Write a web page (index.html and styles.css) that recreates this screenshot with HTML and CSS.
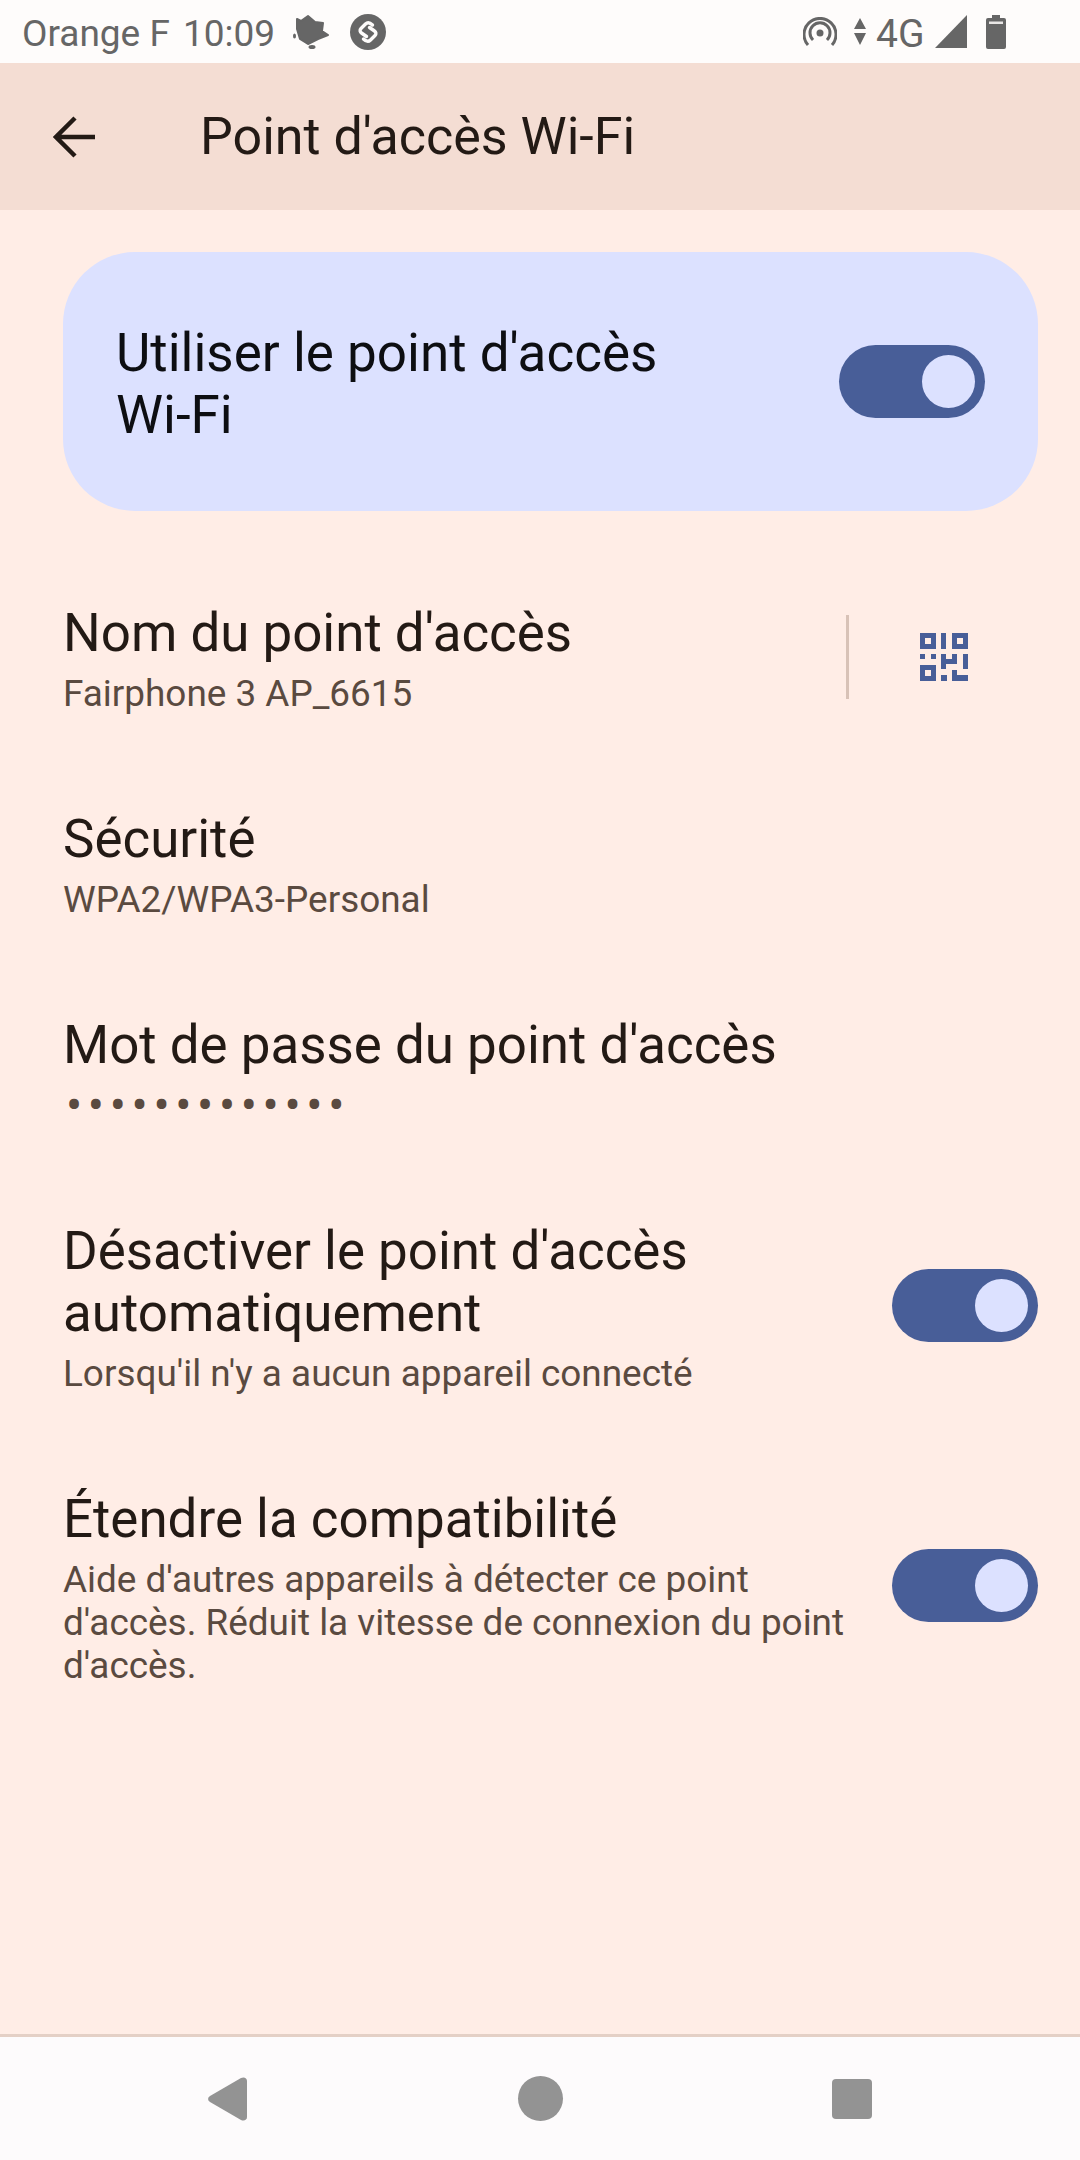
FILE: index.html
```html
<!DOCTYPE html>
<html lang="fr">
<head>
	<meta charset="utf-8">
	<title>Point d'accès Wi-Fi</title>
	<link rel="stylesheet" href="styles.css">
</head>
<body>
	<div class="status">
		<span class="carrier">Orange F</span>
		<span class="time">10:09</span>
		<svg class="leaf" viewBox="0 0 36 36"><path d="M4 5l4 2 7-5 7 6 8 1-1 8 6 4-10 4-10 5-8-5-3-10z" fill="#666" stroke="#666" stroke-width="2" stroke-linejoin="round"/><ellipse cx="1.500" cy="22" rx="1.500" ry="2.500" fill="#666"/><ellipse cx="19" cy="33" rx="3.500" ry="2" fill="#666"/></svg>
		<svg class="shazam" viewBox="0 0 36 36"><circle cx="18" cy="18" r="18" fill="#666"/><path d="M22.500 11C20 8.500 17.500 8 15.500 10L11 14.500C9.500 16 10 18 11.500 19L16.500 22.500M13.500 25C16 27.500 18.500 28 20.500 26L25 21.500C26.500 20 26 18 24.500 17L19.500 13.500" fill="none" stroke="#fefcfb" stroke-width="3.400" stroke-linecap="round"/></svg>
		<span class="status-right">
			<svg class="hotspot" viewBox="0 0 34 30"><circle cx="17" cy="16" r="3.500" fill="#666"/><path d="M10 23a10 10 0 1 1 14 0" fill="none" stroke="#666" stroke-width="3"/><path d="M5 28a16 16 0 1 1 24 0" fill="none" stroke="#666" stroke-width="3"/></svg>
			<svg class="updown" viewBox="0 0 12 27"><path d="M6 0l6 11H0zM0 15h12L6 27z" fill="#666"/></svg>
			<span class="net">4G</span>
			<svg class="signal" viewBox="0 0 32 33"><path d="M32 0v33H0z" fill="#666"/></svg>
			<svg class="battery" viewBox="0 0 20 34"><path d="M6 0h8v3h4a2 2 0 0 1 2 2v27a2 2 0 0 1-2 2H2a2 2 0 0 1-2-2V5a2 2 0 0 1 2-2h4z" fill="#666"/><rect x="3" y="6.500" width="14" height="2.500" fill="#e8e6e5"/></svg>
		</span>
	</div>

	<div class="appbar">
		<svg class="back" viewBox="0 0 42 42"><path d="M42 21H3M22 2L3 21l19 19" fill="none" stroke="#231a15" stroke-width="4.500"/></svg>
		<span class="appbar-title">Point d'accès Wi-Fi</span>
	</div>

	<div class="card">
		<div class="card-label">Utiliser le point d'accès Wi-Fi</div>
		<div class="toggle toggle-card"><i></i></div>
	</div>

	<div class="row">
		<div class="row-text">
			<div class="title">Nom du point d'accès</div>
			<div class="sub">Fairphone 3 AP_6615</div>
		</div>
		<div class="divider"></div>
		<svg class="qr" viewBox="0 0 48 48"><path fill="#485e98" fill-rule="evenodd" d="M0 0h16v16H0zM5 5v6h6V5zM21 0h5v16h-5zM32 0h16v16H32zM37 5v6h6V5zM0 21h5v5H0zM11 21h5v5h-5zM0 32h16v16H0zM5 37v6h6v-6zM21 21h5v5h6v-5h5v10H26v5h-5zM43 21h5v15h-5zM32 37h5v5h11v6H32zM21 42h6v6h-6z"/></svg>
	</div>

	<div class="row">
		<div class="row-text">
			<div class="title">Sécurité</div>
			<div class="sub">WPA2/WPA3-Personal</div>
		</div>
	</div>

	<div class="row">
		<div class="row-text">
			<div class="title">Mot de passe du point d'accès</div>
			<div class="sub dots">•••••••••••••</div>
		</div>
	</div>

	<div class="row">
		<div class="row-text">
			<div class="title">Désactiver le point d'accès automatiquement</div>
			<div class="sub">Lorsqu'il n'y a aucun appareil connecté</div>
		</div>
		<div class="toggle"><i></i></div>
	</div>

	<div class="row">
		<div class="row-text">
			<div class="title">Étendre la compatibilité</div>
			<div class="sub">Aide d'autres appareils à détecter ce point d'accès. Réduit la vitesse de connexion du point d'accès.</div>
		</div>
		<div class="toggle"><i></i></div>
	</div>

	<div class="nav">
		<svg class="nav-back" viewBox="0 0 39 44"><path d="M2 19L33 1c3-1.500 6 0 6 3v36c0 3-3 4.500-6 3L2 25c-2.500-1.500-2.500-4.500 0-6z" fill="#939393"/></svg>
		<div class="nav-home"></div>
		<div class="nav-recent"></div>
	</div>
</body>
</html>
```

FILE: styles.css
```css
* {
	margin: 0;
	padding: 0;
	box-sizing: border-box;
}

body {
	width: 1080px;
	height: 2160px;
	background: #ffede6;
	font-family: Roboto, sans-serif;
	color: #231a15;
	display: flex;
	flex-direction: column;
}

.status {
	height: 63px;
	background: #fefcfb;
	color: #666;
	display: flex;
	align-items: center;
	padding: 0 0 0 22px;
	font-size: 37px;
}

.carrier {
	width: 161px;
	padding-top: 4px;
}

.time {
	width: 110px;
	padding-top: 4px;
}

.leaf {
	width: 36px;
	height: 36px;
	margin-right: 21px;
}

.shazam {
	width: 36px;
	height: 36px;
}

.status-right {
	margin-left: auto;
	display: flex;
	align-items: center;
	padding-right: 74px;
}

.hotspot {
	width: 34px;
	height: 30px;
	margin-right: 17px;
}

.updown {
	width: 12px;
	height: 27px;
	margin-right: 10px;
}

.net {
	width: 59px;
	font-size: 39px;
	padding-top: 4px;
}

.signal {
	width: 32px;
	height: 33px;
	margin-right: 19px;
}

.battery {
	width: 20px;
	height: 34px;
}

.appbar {
	height: 147px;
	background: #f4ddd3;
	display: flex;
	align-items: center;
	padding-left: 53px;
}

.back {
	width: 42px;
	height: 42px;
	margin-right: 105px;
}

.appbar-title {
	font-size: 52px;
}

.card {
	margin: 42px 42px 44px 63px;
	height: 259px;
	background: #dce1ff;
	border-radius: 72px;
	display: flex;
	align-items: center;
	justify-content: space-between;
	padding: 0 53px;
}

.card-label {
	width: 600px;
	padding-top: 5px;
	font-size: 53px;
	line-height: 62px;
	color: #0d0e12;
}

.row {
	display: flex;
	align-items: center;
	padding: 43px 42px 46px 63px;
}

.row-text {
	flex: 1;
	min-width: 0;
	padding-top: 4px;
}

.title {
	font-size: 52.900px;
	line-height: 62px;
	max-width: 740px;
}

.sub {
	font-size: 36.900px;
	line-height: 43px;
	margin-top: 8px;
	color: #5a4a40;
	max-width: 790px;
}

.dots {
	letter-spacing: 5.650px;
	font-size: 48px;
	padding-left: 3px;
}

.divider {
	width: 3px;
	height: 84px;
	background: #d8c2b7;
	margin-right: 71px;
}

.qr {
	width: 48px;
	height: 48px;
	margin-right: 70px;
}

.toggle {
	width: 146px;
	height: 73px;
	border-radius: 37px;
	background: #485e98;
	flex-shrink: 0;
	display: flex;
	align-items: center;
	justify-content: flex-end;
	padding-right: 10px;
}

.toggle i {
	width: 53px;
	height: 53px;
	border-radius: 50%;
	background: #dce1ff;
}

.nav {
	margin-top: auto;
	height: 126px;
	background: #fdfbfc;
	border-top: 3px solid #e4d0c6;
	display: flex;
	align-items: center;
	padding-left: 208px;
}

.nav-back {
	width: 39px;
	height: 44px;
	margin-right: 271px;
}

.nav-home {
	width: 45px;
	height: 45px;
	border-radius: 50%;
	background: #939393;
	margin-right: 269px;
}

.nav-recent {
	width: 40px;
	height: 40px;
	border-radius: 4px;
	background: #939393;
}
```
